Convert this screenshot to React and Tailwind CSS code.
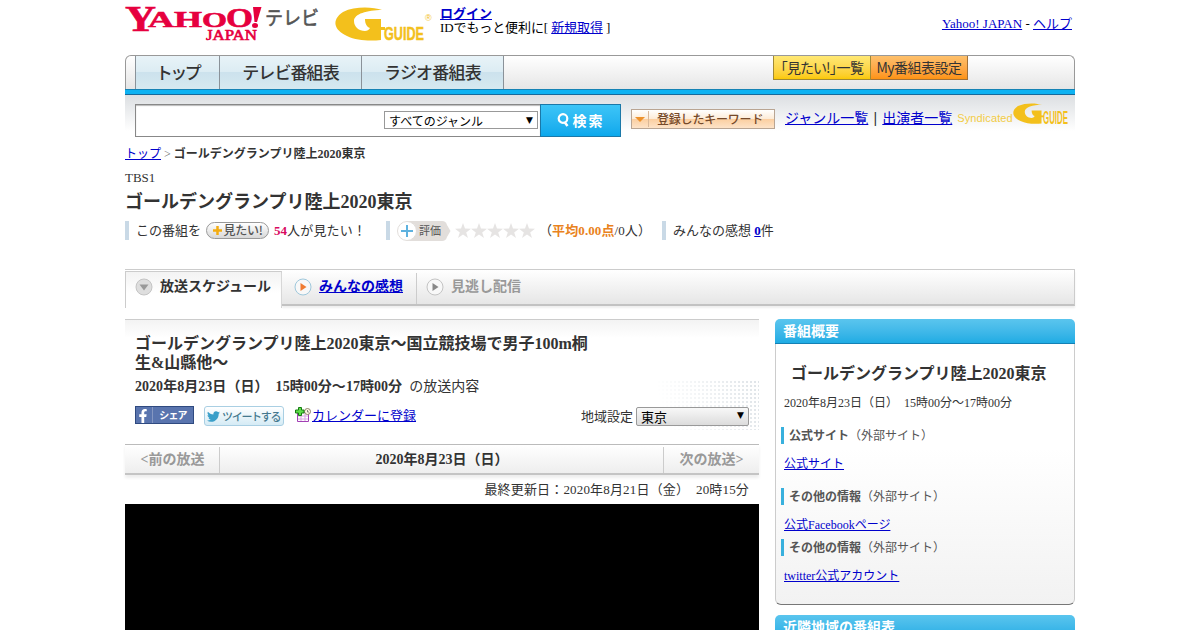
import React from 'react';
import { FaFacebookF, FaTwitter } from 'react-icons/fa';

const tabs = [
  { label: 'トップ', style: 'w-[84px] tracking-[-2.5px]' },
  { label: 'テレビ番組表', style: 'w-[142px] tracking-[-0.9px]' },
  { label: 'ラジオ番組表', style: 'w-[142px] tracking-[-0.8px]' },
];

const infoLinks = [
  { title: '公式サイト', link: '公式サイト', margin: 'mt-[16px]' },
  { title: 'その他の情報', link: '公式Facebookページ', margin: 'mt-[16px]' },
  { title: 'その他の情報', link: 'twitter公式アカウント', margin: 'mt-[6px]' },
];

function A({ children, className = '' }) {
  return <a href="#" className={`text-[#0000cc] underline ${className}`}>{children}</a>;
}

function YahooTvLogo() {
  return (
    <svg width="196" height="46" viewBox="0 0 196 46" className="block shrink-0 overflow-visible">
      <g fill="#e6003e" stroke="#e6003e" strokeWidth="0.6" fontFamily="Liberation Serif, serif">
        <text x="0" y="31" fontSize="36" fontWeight="bold" textLength="31" lengthAdjust="spacingAndGlyphs">Y</text>
        <text x="23" y="26.5" fontSize="23" fontWeight="bold" textLength="54" lengthAdjust="spacingAndGlyphs">AH</text>
        <text x="77" y="26.5" fontSize="22" fontWeight="bold" textLength="25" lengthAdjust="spacingAndGlyphs">O</text>
        <text x="101" y="27" fontSize="27" fontWeight="bold" textLength="27" lengthAdjust="spacingAndGlyphs">O</text>
        <text x="81" y="40" fontSize="15" textLength="51" lengthAdjust="spacingAndGlyphs">JAPAN</text>
      </g>
      <path d="M128 7h8.500l-4.500 15h-2.500z" fill="#e6003e" />
      <ellipse cx="130" cy="25.500" rx="3" ry="2.500" fill="#e6003e" />
      <text x="140" y="25" fontSize="19" fill="#555" stroke="#555" strokeWidth="0.6" textLength="54" lengthAdjust="spacingAndGlyphs" fontFamily="Noto Sans CJK JP, sans-serif">テレビ</text>
    </svg>
  );
}

function GGuideMark() {
  return (
    <g fill="#f3c01c">
      <path d="M47 3C38 0 20-1 8 5-4 13-1 23 12 29c10 5 24 5 34 4V12H30c0 5 2 8 5 9-1 2-3 3-5 3-6 0-11-4-11-10C19 7 32 3 47 3z" />
      <path d="M45 20h5v3h-5z" />
    </g>
  );
}

function GGuideLogo() {
  return (
    <svg width="98" height="34" viewBox="0 0 98 34" className="block shrink-0 overflow-visible">
      <GGuideMark />
      <g fill="#f3c01c" fontFamily="Liberation Sans, sans-serif">
        <text x="49" y="33" fontSize="19" fontWeight="bold" stroke="#f3c01c" strokeWidth="0.5" textLength="40" lengthAdjust="spacingAndGlyphs">GUIDE</text>
        <text x="90" y="14" fontSize="9">®</text>
      </g>
    </svg>
  );
}

function SyndicatedLogo() {
  return (
    <svg width="58" height="22" viewBox="0 0 58 22" className="block shrink-0 overflow-visible">
      <g transform="scale(.62)">
        <GGuideMark />
      </g>
      <text x="30" y="20.500" fontSize="18" fontWeight="bold" fill="#f3c01c" textLength="25" lengthAdjust="spacingAndGlyphs" fontFamily="Liberation Sans, sans-serif">GUIDE</text>
    </svg>
  );
}

function CircleArrow({ fill, ring, down }) {
  return (
    <svg width="18" height="18" viewBox="0 0 18 18" className="block shrink-0">
      <circle cx="9" cy="9" r="8" fill={down ? '#dedede' : '#f8f8f8'} stroke={ring} />
      <path d={down ? 'M4.500 6.500h9L9 12.500z' : 'M6.500 5v8l6-4z'} fill={fill} />
    </svg>
  );
}

function CalendarIcon() {
  return (
    <svg width="16" height="16" viewBox="0 0 16 16" className="block shrink-0">
      <path d="M2.500 5.500h11v9h-11z" fill="#fff" stroke="#a23fb5" />
      <path d="M3 9h10M3 12h10M6 6v8M10 6v8" stroke="#d9a5e2" />
      <circle cx="12.500" cy="4.500" r="3" fill="#fdf7e2" stroke="#8d8168" />
      <path d="M12.500 3v2h1.500" fill="none" stroke="#555" strokeWidth=".7" />
      <path d="M3.500.5h3v2.500H9v3H6.500v2.500h-3V6H.5V3h3z" fill="#5fdc4a" stroke="#167d12" />
    </svg>
  );
}

function Header() {
  return (
    <div className="flex h-[55px] text-[13px] leading-[14px] text-black">
      <YahooTvLogo />
      <div className="ml-[14px] pt-[7px]">
        <GGuideLogo />
      </div>
      <div className="ml-[7px] pt-[7px]">
        <div><A className="font-bold">ログイン</A></div>
        <div className="tracking-[-0.1px]">IDでもっと便利に[ <A>新規取得</A> ]</div>
      </div>
      <div className="ml-auto mr-[3px] pt-[17px]">
        <A>Yahoo! JAPAN</A> - <A>ヘルプ</A>
      </div>
    </div>
  );
}

function Nav() {
  return (
    <div className="font-['Noto_Sans_CJK_JP',sans-serif]">
      <div className="flex h-[34px] rounded-t-[6px] border-x border-t border-[#999] bg-linear-to-b from-white to-[#e6e6e6] pl-[9px]">
        <div className="flex border-l border-[#8a9299]">
          {tabs.map(tab => (
            <div key={tab.label} className={`${tab.style} flex items-center justify-center border-r border-[#8a9299] bg-[linear-gradient(#e8f3f8_0%,#dcecf3_48%,#cce2ed_50%,#d6e9f0_100%)] pb-[2px] text-[17px] font-medium leading-none text-[#333]`}>
              {tab.label}
            </div>
          ))}
        </div>
        <div className="ml-[269px] flex h-[24px] text-[14px] leading-[22px] tracking-[-0.5px] text-[#333]">
          <div className="w-[98px] whitespace-nowrap border-x border-b border-[#a18a35] bg-linear-to-b from-[#ffe873] to-[#fbc900] text-center [font-feature-settings:'palt']">「見たい!」一覧</div>
          <div className="w-[97px] whitespace-nowrap border-b border-r border-[#a1713a] bg-linear-to-b from-[#fdc06b] to-[#fd9311] text-center [font-feature-settings:'palt']">My番組表設定</div>
        </div>
      </div>
      <div className="h-[6px] border-y border-[#17699a] border-t-[#1583b5] bg-[#0db2f2]" />
    </div>
  );
}

function SearchBar() {
  return (
    <div className="flex h-[51px] bg-[linear-gradient(#dcdfe2,#fff_36px)] pl-[10px] pt-[9px]">
      <div className="flex h-[33px] w-[405px] justify-end border border-r-0 border-[#888] bg-white pr-[2px] pt-[6px] shadow-[inset_0_1px_1px_#bbb]">
        <div className="flex h-[18px] w-[154px] items-center justify-between border border-[#999] bg-white pl-1 pr-[4px] text-[12px] leading-none text-black">
          <span className="pt-[3px]">すべてのジャンル</span>
          <span className="font-['DejaVu_Sans'] text-[9px]">▼</span>
        </div>
      </div>
      <div className="flex h-[33px] w-[81px] items-center justify-center border border-[#1b78a8] bg-linear-to-b from-[#3cc5f7] to-[#0aa8ec] pb-[2px] text-white">
        <svg width="12" height="14" viewBox="0 0 12 14" className="mr-[4px]">
          <circle cx="6" cy="5.500" r="4.300" fill="none" stroke="#fff" strokeWidth="2.200" />
          <path d="M7.500 9l3 4" stroke="#fff" strokeWidth="2.500" />
        </svg>
        <span className="font-['Noto_Sans_CJK_JP',sans-serif] text-[14px] font-bold leading-none tracking-[2px]">検索</span>
      </div>
      <div className="ml-[10px] mt-[5px] flex h-[20px] w-[144px] items-center border border-[#b9a593] bg-[linear-gradient(#fff_0%,#fdebd6_50%,#fbcfa1_52%,#fde3c8_100%)]">
        <div className="flex h-4 w-[17px] items-center justify-center border-r border-[#d9b899]">
          <svg width="10" height="5"><path d="M0 0h10L5 5z" fill="#ee922c" /></svg>
        </div>
        <span className="ml-[8px] whitespace-nowrap font-['Noto_Sans_CJK_JP',sans-serif] text-[12px] font-medium leading-none tracking-[-0.2px] text-[#75492a]">登録したキーワード</span>
      </div>
      <div className="ml-[10px] pt-[5px] text-[14px] leading-[18px]">
        <A>ジャンル一覧</A><span className="inline-block w-[14px] text-center font-['Liberation_Sans']">|</span><A>出演者一覧</A>
      </div>
      <div className="ml-[5px] pt-[6px] font-['Liberation_Sans'] text-[11px] leading-[16px] tracking-[0.1px] text-[#f2cc45]">Syndicated</div>
      <div className="-mt-px">
        <SyndicatedLogo />
      </div>
    </div>
  );
}

function Stars() {
  return (
    <svg width="80" height="16" viewBox="0 0 80 16" className="ml-[4px] block">
      {[0, 16, 32, 48, 64].map(x => (
        <path key={x} transform={`translate(${x} 0)`} d="M8 0l2 5.600 6 .1-4.800 3.700L13 15l-5-3.400L3 15l1.800-5.600L0 5.700l6-.1z" fill="#e6e4e3" />
      ))}
    </svg>
  );
}

function ProgramInfo() {
  return (
    <div>
      <div className="h-[16px] text-[12px] leading-[16px] text-[#666]">
        <A>トップ</A> &gt; <b className="text-[#333]">ゴールデングランプリ陸上2020東京</b>
      </div>
      <div className="mt-[8px] text-[13px] leading-[16px]">TBS1</div>
      <h1 className="mt-[5px] text-[18px] font-bold leading-[22px]">ゴールデングランプリ陸上2020東京</h1>
      <div className="mt-[8px] flex h-[19px] items-center whitespace-nowrap text-[13px] leading-[19px]">
        <div className="flex h-[19px] w-[261px] items-center border-l-4 border-[#c9d9e6] pl-[7px]">
          この番組を
          <span className="ml-[5px] flex h-[17px] w-[63px] items-center justify-center rounded-full border border-[#999] bg-linear-to-b from-white to-[#d8d8d8] font-['Noto_Sans_CJK_JP',sans-serif] text-[12px] font-medium leading-none text-[#555]">
            <svg width="9" height="9" className="mr-[2px]"><path d="M4.500 0v9M0 4.500h9" stroke="#f3ac10" strokeWidth="2.500" /></svg>
            <span className="pb-px tracking-[-0.3px]">見たい!</span>
          </span>
          <b className="ml-[5px] text-[#d9095f]">54</b><span className="tracking-[0.2px]">人が見たい！</span>
        </div>
        <div className="flex h-[19px] w-[276px] items-center border-l-4 border-[#c9d9e6] pl-[7px]">
          <svg width="54" height="20" viewBox="0 0 54 20" className="block">
            <path d="M10 0h35q4 0 5 4l3.500 6-3.500 6q-1 4-5 4H10z" fill="#e2dedb" />
            <circle cx="10" cy="10" r="9.500" fill="#fff" stroke="#e2dedb" />
            <path d="M10 4v12M4 10h12" stroke="#5fb2df" strokeWidth="2" />
            <text x="22" y="14" fontSize="11" fill="#555" fontFamily="Noto Sans CJK JP, sans-serif">評価</text>
          </svg>
          <Stars />
          <span className="ml-[4px] tracking-[0.1px]">（<b className="text-[#e98220]">平均0.00点</b>/0人）</span>
        </div>
        <div className="h-[19px] border-l-4 border-[#c9d9e6] pl-[7px]">
          みんなの感想 <A className="font-bold">0</A>件
        </div>
      </div>
    </div>
  );
}

function SubTabs() {
  return (
    <div className="mt-[29px] flex h-[39px] border-t border-[#ccc] text-[14px] leading-[18px]">
      <div className="mt-px flex w-[157px] border border-b-0 border-[#ccc] bg-linear-to-b from-[#f3f3f3] to-white to-60% pl-[9px] pt-[6px]">
        <CircleArrow down fill="#999" ring="#c4c4c4" />
        <b className="ml-[7px]">放送スケジュール</b>
      </div>
      <div className="flex h-[36px] flex-1 border-b-2 border-r border-b-[#c2c2c2] border-r-[#ccc] bg-linear-to-b from-white to-[#e6e6e6] shadow-[0_2px_2px_#eee]">
        <div className="flex w-[134px] pl-[12px] pt-[8px]">
          <CircleArrow fill="#f07b32" ring="#9fc8dc" />
          <A className="ml-[7px] font-bold">みんなの感想</A>
        </div>
        <div className="mt-[3px] flex border-l border-[#ccc] pl-[9px] pt-[5px] text-[#999]">
          <CircleArrow fill="#888" ring="#c4c4c4" />
          <b className="ml-[7px]">見逃し配信</b>
        </div>
      </div>
    </div>
  );
}

function RegionSelect() {
  return (
    <div className="relative ml-auto flex h-[50px] w-[178px] items-center pt-[22px] text-[13px] leading-none">
      <div className="absolute inset-0 bg-[radial-gradient(circle,#dfe4e8_1px,transparent_1.4px)] bg-[length:4px_4px] [mask-image:linear-gradient(75deg,transparent_45%,#000)]" />
      <span className="relative">地域設定</span>
      <div className="relative ml-[3px] flex h-[19px] w-[113px] items-center justify-between rounded-[2px] border border-[#999] bg-linear-to-b from-[#f8f8f8] to-[#dcdcdc] pl-[4px] pr-[4px] text-black">
        <span className="pt-[2px]">東京</span>
        <span className="pb-px font-['DejaVu_Sans'] text-[9px]">▼</span>
      </div>
    </div>
  );
}

function Schedule() {
  return (
    <div className="w-[634px]">
      <div className="h-[125px] border-t border-[#ccc] bg-[linear-gradient(#f3f3f3,#fff_18px)]">
        <div className="px-[10px] pt-[14px]">
          <h2 className="w-[460px] text-[16px] font-bold leading-[19px]">ゴールデングランプリ陸上2020東京～国立競技場で男子100m桐生&amp;山縣他～</h2>
          <p className="mt-[6px] text-[14px] leading-[18px] tracking-[0.04px]">
            <b>2020年8月23日（日）&nbsp;&nbsp;15時00分～17時00分</b>&nbsp;&nbsp;の放送内容
          </p>
        </div>
        <div className="-mt-[16px] flex h-[50px] pl-[10px]">
          <div className="mt-[26px] flex h-[18px] w-[59px] border border-[#2f4a80] bg-[#5974ae] text-white">
            <div className="flex w-[17px] items-end justify-end border-r border-[#8597c2] pr-[2px]"><FaFacebookF size={14} /></div>
            <span className="flex-1 text-center font-['Noto_Sans_CJK_JP',sans-serif] text-[10px] font-bold leading-[16px] tracking-[-0.8px]">シェア</span>
          </div>
          <div className="ml-[10px] mt-[26px] flex h-[20px] w-[80px] items-center rounded-[3px] border border-[#a9cfe3] bg-linear-to-b from-white to-[#d5ebf5] pl-[2px]">
            <FaTwitter size={13} color="#3a9fc9" />
            <span className="ml-[2px] whitespace-nowrap font-['Noto_Sans_CJK_JP',sans-serif] text-[11px] font-medium leading-none tracking-[-1.3px] text-[#45798f]">ツイートする</span>
          </div>
          <div className="ml-[11px] mt-[27px] flex text-[13px] leading-[18px]">
            <CalendarIcon />
            <A className="ml-px">カレンダーに登録</A>
          </div>
          <RegionSelect />
        </div>
      </div>
      <div className="flex h-[31px] border-b-2 border-t border-b-[#c4c4c4] border-t-[#bbb] bg-linear-to-b from-white to-[#eee] pt-[2px] text-[14px] leading-[26px] text-[#999] shadow-[0_3px_3px_#eee]">
        <b className="w-[95px] border-r border-[#ccc] pl-px text-center">&lt;前の放送</b>
        <b className="flex-1 pl-px text-center text-[#333]">2020年8月23日（日）</b>
        <b className="w-[96px] border-l border-[#ccc] text-center">次の放送&gt;</b>
      </div>
      <div className="h-[29px] pr-[10px] pt-[6px] text-right text-[13px] leading-[18px] tracking-[0.17px]">最終更新日：2020年8月21日（金）&nbsp;&nbsp;20時15分</div>
      <div className="h-[140px] bg-black" />
    </div>
  );
}

function BoxHeader({ children }) {
  return (
    <h3 className="h-[25px] rounded-t-[5px] border-b border-[#1481b5] bg-linear-to-b from-[#5ac5ee] to-[#1dace4] pl-[8px] text-[14px] font-bold leading-[25px] text-white">{children}</h3>
  );
}

function Sidebar() {
  return (
    <div className="ml-[16px] w-[300px]">
      <BoxHeader>番組概要</BoxHeader>
      <div className="h-[261px] rounded-b-[6px] border border-t-0 border-[#ccc] border-b-[#777] bg-linear-to-b from-white from-40% to-[#f2f2f2] pl-[5px] pt-[20px] text-[12px]">
        <h2 className="pl-[10px] text-[16px] font-bold leading-[20px]">ゴールデングランプリ陸上2020東京</h2>
        <p className="mt-[11px] pl-[3px] leading-[16px]">2020年8月23日（日）&nbsp;&nbsp;15時00分～17時00分</p>
        {infoLinks.map((item, i) => (
          <div key={i} className={item.margin}>
            <div className="h-[17px] border-l-[3px] border-[#38b0dd] pl-[5px] leading-[19px] text-[#555]"><b>{item.title}</b>（外部サイト）</div>
            <div className="mt-[11px] h-[17px] pl-[3px] leading-[19px]"><A>{item.link}</A></div>
          </div>
        ))}
      </div>
      <div className="mt-[10px]">
        <BoxHeader>近隣地域の番組表</BoxHeader>
      </div>
    </div>
  );
}

export default function App() {
  return (
    <div className="h-[630px] w-[1200px] overflow-hidden bg-white font-['Liberation_Serif','Noto_Sans_CJK_JP',serif] text-[#333]">
      <div className="mx-auto w-[950px]">
        <Header />
        <Nav />
        <SearchBar />
        <ProgramInfo />
        <SubTabs />
        <div className="mt-[11px] flex">
          <Schedule />
          <Sidebar />
        </div>
      </div>
    </div>
  );
}
